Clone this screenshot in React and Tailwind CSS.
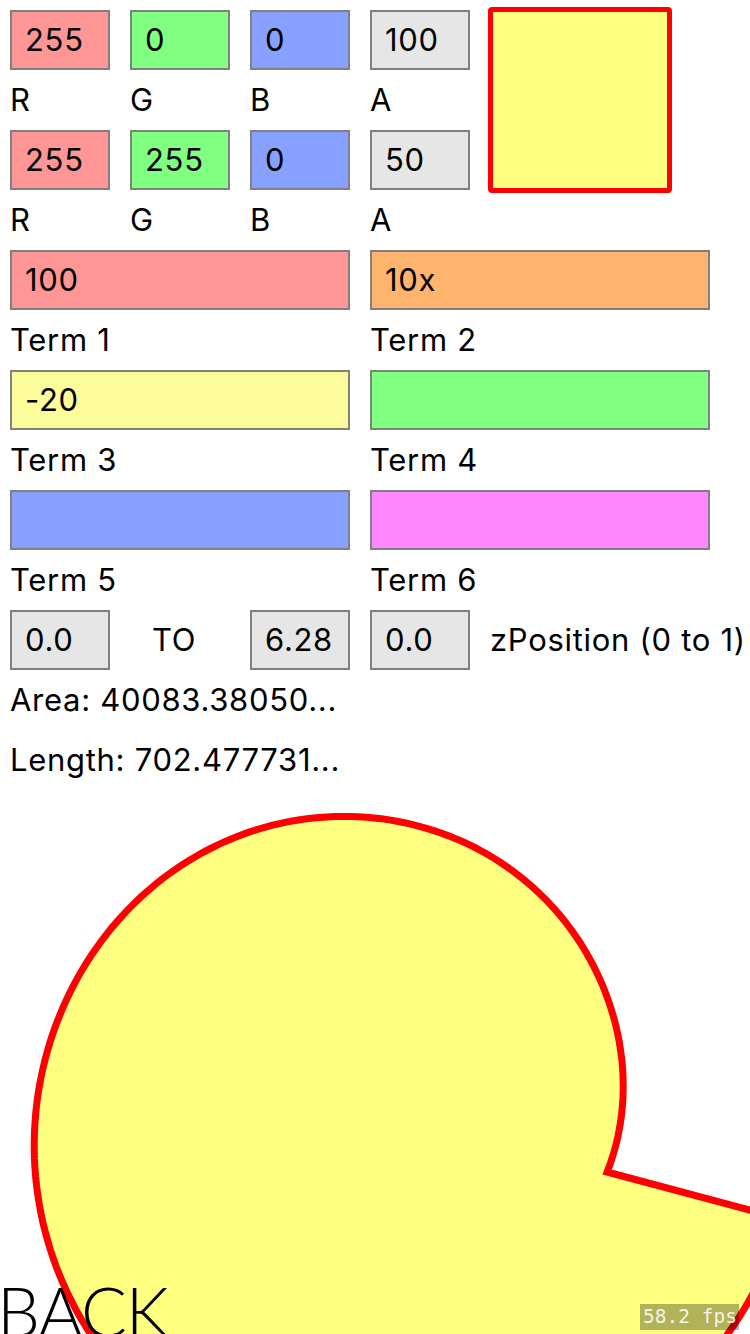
import React from 'react';

// spiral r(θ) traced from the picture: centre, start angle and radius anchors
const CX = 382;
const CY = 1112;
const START = (-14.93 * Math.PI) / 180;
const radii = [233, 254.4, 283.2, 312.7, 337.5, 363, 382, 401, 417];

function radiusAt(t) {
  const step = (Math.PI * 2) / (radii.length - 1);
  const i = Math.min(Math.floor(t / step), radii.length - 2);
  const u = t / step - i;
  const p0 = radii[i - 1] ?? 2 * radii[0] - radii[1];
  const p1 = radii[i];
  const p2 = radii[i + 1];
  const p3 = radii[i + 2] ?? 2 * radii[radii.length - 1] - radii[radii.length - 2];
  return (
    0.5 *
    (2 * p1 +
      (-p0 + p2) * u +
      (2 * p0 - 5 * p1 + 4 * p2 - p3) * u * u +
      (-p0 + 3 * p1 - 3 * p2 + p3) * u * u * u)
  );
}

function buildSpiral() {
  const pts = [];
  const n = 240;
  for (let k = 0; k <= n; k++) {
    const t = (k / n) * Math.PI * 2;
    const r = radiusAt(t);
    const a = START + t;
    pts.push(`${(CX + r * Math.cos(a)).toFixed(1)},${(CY - r * Math.sin(a)).toFixed(1)}`);
  }
  return `M${pts.join(' L')} Z`;
}

const spiralPath = buildSpiral();

function Field({ value, bg }) {
  return (
    <div className={`h-[60px] border-2 border-[#808080] flex items-center pl-[13px] text-[31px] tracking-[0.7px] text-black ${bg}`}>
      {value}
    </div>
  );
}

function Label({ children, className = '' }) {
  return (
    <div className={`h-[60px] flex items-center text-[31px] tracking-[0.7px] text-black whitespace-nowrap ${className}`}>
      {children}
    </div>
  );
}

export default function App() {
  return (
    <div
      className="relative w-[750px] h-[1334px] overflow-hidden bg-white flex flex-col"
      style={{ fontFamily: 'Inter, "Liberation Sans", sans-serif' }}
    >
      <div className="px-[10px] pt-[10px] flex flex-col">
        <div className="flex items-start">
          <div className="grid grid-cols-[repeat(4,100px)] gap-x-[20px]">
            <Field value="255" bg="bg-[#ff9696]" />
            <Field value="0" bg="bg-[#80ff80]" />
            <Field value="0" bg="bg-[#88a0ff]" />
            <Field value="100" bg="bg-[#e6e6e6]" />
            <Label>R</Label>
            <Label>G</Label>
            <Label>B</Label>
            <Label>A</Label>
            <Field value="255" bg="bg-[#ff9696]" />
            <Field value="255" bg="bg-[#80ff80]" />
            <Field value="0" bg="bg-[#88a0ff]" />
            <Field value="50" bg="bg-[#e6e6e6]" />
            <Label>R</Label>
            <Label>G</Label>
            <Label>B</Label>
            <Label>A</Label>
          </div>
          <div className="ml-[18px] mt-[-3px] w-[184px] h-[186px] border-[5px] border-[#ff0000] rounded-[4px] bg-[#ffff80]" />
        </div>

        <div className="grid grid-cols-[340px_340px] gap-x-[20px]">
          <Field value="100" bg="bg-[#ff9696]" />
          <Field value="10x" bg="bg-[#ffb46e]" />
          <Label>Term 1</Label>
          <Label>Term 2</Label>
          <Field value="-20" bg="bg-[#fcfc9a]" />
          <Field value="" bg="bg-[#80ff80]" />
          <Label>Term 3</Label>
          <Label>Term 4</Label>
          <Field value="" bg="bg-[#88a0ff]" />
          <Field value="" bg="bg-[#ff88ff]" />
          <Label>Term 5</Label>
          <Label>Term 6</Label>
        </div>

        <div className="grid grid-cols-[100px_100px_100px_100px_auto] gap-x-[20px]">
          <Field value="0.0" bg="bg-[#e6e6e6]" />
          <Label className="pl-[22px]">TO</Label>
          <Field value="6.28" bg="bg-[#e6e6e6]" />
          <Field value="0.0" bg="bg-[#e6e6e6]" />
          <Label>zPosition (0 to 1)</Label>
        </div>

        <Label>Area: 40083.38050...</Label>
        <Label>Length: 702.477731...</Label>
      </div>

      <div className="flex-1 min-h-0">
        <svg className="block w-[750px] h-[544px]" viewBox="0 790 750 544">
          <path d={spiralPath} fill="#ffff80" stroke="#ff0000" strokeWidth="7" strokeLinejoin="miter" />
        </svg>
      </div>

      <div
        className="absolute left-[-3px] top-[1277px] text-[68px] leading-none font-light tracking-[-1px] text-black"
        style={{ fontFamily: 'Lato, "Open Sans", sans-serif' }}
      >
        BACK
      </div>

      <div
        className="absolute right-[11px] bottom-[4px] w-[99px] h-[26px] bg-black/30 text-white/85 text-[19.5px] leading-[26px] pl-[3px] whitespace-nowrap"
        style={{ fontFamily: '"DejaVu Sans Mono", monospace' }}
      >
        58.2 fps
      </div>
    </div>
  );
}
